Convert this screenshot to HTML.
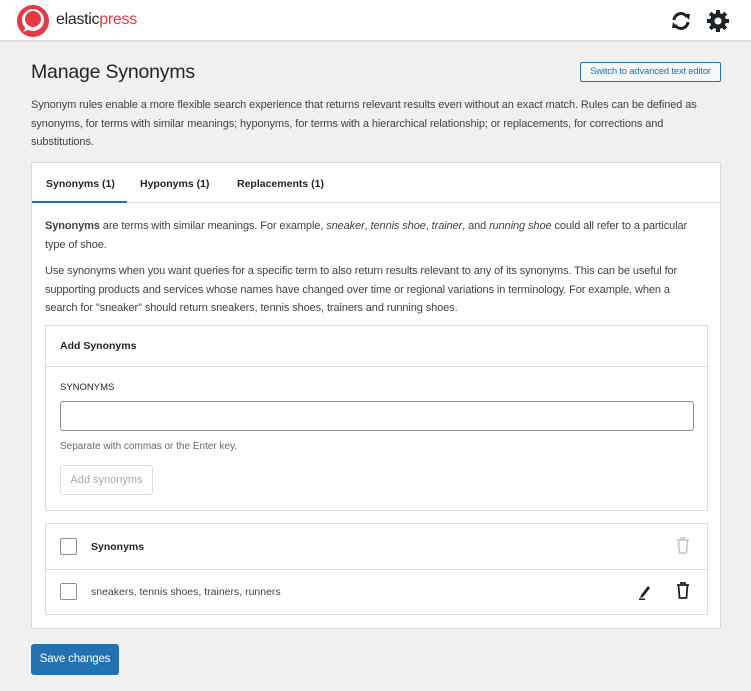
<!DOCTYPE html>
<html><head><meta charset="utf-8"><style>
*{box-sizing:border-box;margin:0;padding:0}
body{width:751px;height:691px;background:#f0f0f1;font-family:"Liberation Sans",sans-serif;color:#3c434a;font-size:11px;position:relative;overflow:hidden}
.hdr{position:absolute;left:0;top:0;width:751px;height:42px;background:#fff;border-bottom:2px solid #dcdcde}
.abs{position:absolute}
p{line-height:18.5px;letter-spacing:-0.1px}
.card{position:absolute;left:31px;top:162px;width:690px;height:467px;background:#fff;border:1px solid #dcdcde}
.tab{position:absolute;top:15px;font-weight:bold;color:#1d2327;font-size:10.5px}
.box{position:absolute;border:1px solid #dcdcde;background:#fff}
.cb{position:absolute;width:17px;height:17px;border:1px solid #8c8f94;border-radius:2px;background:#fff}
</style></head><body>
<div class="hdr">
<svg class="abs" style="left:16px;top:4px" width="34" height="34" viewBox="0 0 34 34"><circle cx="17" cy="17" r="16" fill="#e63946"/><circle cx="17" cy="16" r="11" fill="#fff"/><circle cx="17" cy="15" r="8" fill="#e63946"/><path d="M7 28 L11 22 L14 25 Z" fill="#fff"/></svg>
<div class="abs" style="left:56px;top:11px;font-size:16px;color:#1d2327;letter-spacing:-0.3px">elastic<span style="color:#e63946">press</span></div>
<svg class="abs" style="left:670px;top:10px" width="22" height="22" viewBox="0 0 22 22"><path d="M4 10 A7 7 0 0 1 17 7" stroke="#1d2327" stroke-width="3" fill="none"/><path d="M14 4 L20 4 L19 10 Z" fill="#1d2327"/><path d="M18 12 A7 7 0 0 1 5 15" stroke="#1d2327" stroke-width="3" fill="none"/><path d="M8 18 L2 18 L3 12 Z" fill="#1d2327"/></svg>
<svg class="abs" style="left:706px;top:9px" width="24" height="24" viewBox="0 0 24 24"><g fill="#1d2327"><circle cx="12" cy="12" r="8"/><rect x="10" y="1" width="4" height="22"/><rect x="1" y="10" width="22" height="4"/><rect x="10" y="1" width="4" height="22" transform="rotate(45 12 12)"/><rect x="10" y="1" width="4" height="22" transform="rotate(-45 12 12)"/></g><circle cx="12" cy="12" r="3.5" fill="#fff"/></svg>
</div>
<div class="abs" style="left:31px;top:61px;font-size:19.5px;color:#1d2327;letter-spacing:-0.2px">Manage Synonyms</div>
<div class="abs" style="left:580px;top:62px;width:141px;height:20px;border:1px solid #2271b1;border-radius:2px;color:#2271b1;font-size:9.5px;line-height:18px;text-align:center;background:#f6f7f7;letter-spacing:-0.2px">Switch to advanced text editor</div>
<p class="abs" style="left:31px;top:96px;width:668px">Synonym rules enable a more flexible search experience that returns relevant results even without an exact match. Rules can be defined as synonyms, for terms with similar meanings; hyponyms, for terms with a hierarchical relationship; or replacements, for corrections and substitutions.</p>
<div class="card">
<div class="tab" style="left:14px">Synonyms (1)</div>
<div class="tab" style="left:108px">Hyponyms (1)</div>
<div class="tab" style="left:205px">Replacements (1)</div>
<div class="abs" style="left:0;top:39px;width:688px;height:1px;background:#dcdcde"></div>
<div class="abs" style="left:0;top:38px;width:95px;height:2px;background:#2271b1"></div>
<p class="abs" style="left:13px;top:54px;width:655px"><b>Synonyms</b> are terms with similar meanings. For example, <i>sneaker</i>, <i>tennis shoe</i>, <i>trainer</i>, and <i>running shoe</i> could all refer to a particular type of shoe.</p>
<p class="abs" style="left:13px;top:99px;width:655px">Use synonyms when you want queries for a specific term to also return results relevant to any of its synonyms. This can be useful for supporting products and services whose names have changed over time or regional variations in terminology. For example, when a search for "sneaker" should return sneakers, tennis shoes, trainers and running shoes.</p>
<div class="box" style="left:13px;top:162px;width:663px;height:186px">
<div class="abs" style="left:14px;top:14px;font-weight:bold;color:#1d2327;font-size:10.5px">Add Synonyms</div>
<div class="abs" style="left:0;top:40px;width:661px;height:1px;background:#dcdcde"></div>
<div class="abs" style="left:14px;top:56px;font-size:9.5px;color:#1d2327">SYNONYMS</div>
<div class="abs" style="left:14px;top:75px;width:634px;height:30px;border:1px solid #8c8f94;border-radius:3px"></div>
<div class="abs" style="left:14px;top:115px;font-size:10px;color:#646970">Separate with commas or the Enter key.</div>
<div class="abs" style="left:14px;top:139px;width:93px;height:30px;border:1px solid #dcdcde;border-radius:3px;color:#a7aaad;font-size:11px;line-height:28px;text-align:center">Add synonyms</div>
</div>
<div class="box" style="left:13px;top:360px;width:663px;height:92px">
<div class="cb" style="left:14px;top:14px"></div>
<div class="abs" style="left:45px;top:17px;font-weight:bold;color:#1d2327;font-size:10.5px">Synonyms</div>
<svg class="abs" style="left:630px;top:13px" width="14" height="17" viewBox="0 0 14 17"><path d="M1 3h12M5 3V1h4v2M2.5 3l1 13h7l1-13" stroke="#c3c4c7" stroke-width="1.5" fill="none"/></svg>
<div class="abs" style="left:0;top:45px;width:661px;height:1px;background:#dcdcde"></div>
<div class="cb" style="left:14px;top:59px"></div>
<div class="abs" style="left:45px;top:62px;font-size:10.5px">sneakers, tennis shoes, trainers, runners</div>
<svg class="abs" style="left:592px;top:60px" width="14" height="16" viewBox="0 0 14 16"><path d="M3 11 L10 2 L12 4 L5 13 L2 14 Z" fill="#1d2327"/><rect x="1" y="14.5" width="6" height="1.5" fill="#1d2327"/></svg>
<svg class="abs" style="left:630px;top:58px" width="14" height="17" viewBox="0 0 14 17"><path d="M1 3h12M5 3V1h4v2M2.5 3l1 13h7l1-13" stroke="#1d2327" stroke-width="1.8" fill="none"/></svg>
</div>
</div>
<div class="abs" style="left:31px;top:644px;width:88px;height:31px;background:#2271b1;border-radius:3px;color:#fff;font-size:11.5px;line-height:31px;text-align:center;letter-spacing:-0.2px">Save changes</div>
</body></html>
